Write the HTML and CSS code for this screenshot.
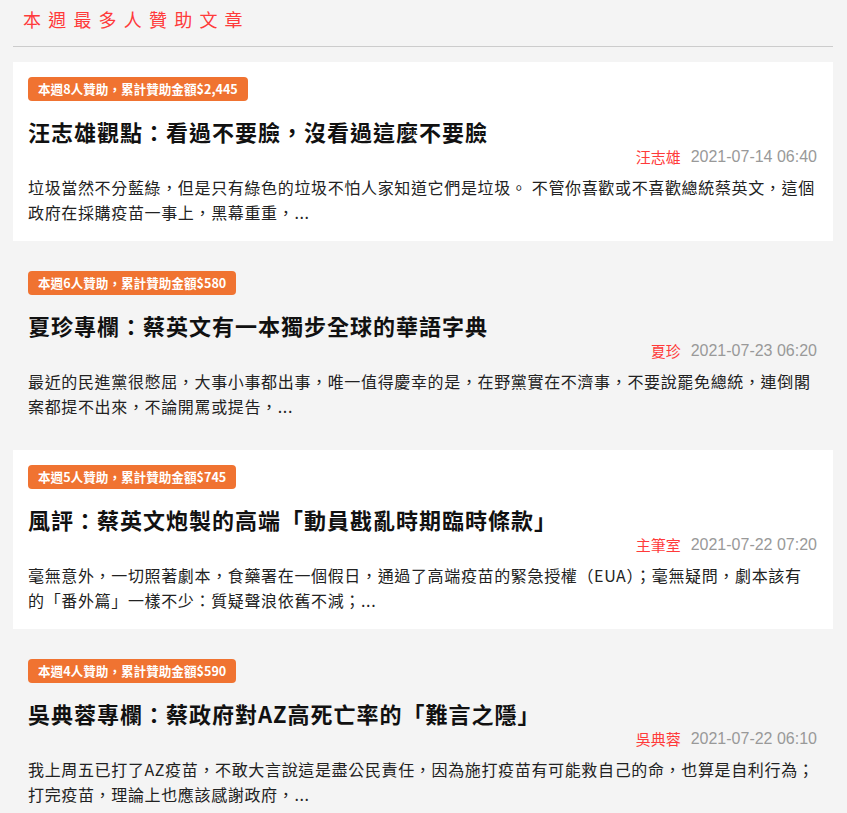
FILE: index.html
```html
<!DOCTYPE html>
<html lang="zh-Hant">
<head>
    <meta charset="UTF-8">
    <meta name="viewport" content="width=device-width, initial-scale=1.0">
    <title>本週最多人贊助文章</title>
    <link rel="stylesheet" href="styles.css">
</head>
<body>
    <div class="page">
        <h2 class="section-title">本週最多人贊助文章</h2>
        <hr class="divider">

        <div class="article-list">
            <div class="article-card">
                <div class="sponsor-badge">本週8人贊助，累計贊助金額$2,445</div>
                <h3 class="article-title">汪志雄觀點：看過不要臉，沒看過這麼不要臉</h3>
                <div class="article-meta">
                    <span class="author">汪志雄</span>
                    <span class="date">2021-07-14 06:40</span>
                </div>
                <p class="article-summary">垃圾當然不分藍綠，但是只有綠色的垃圾不怕人家知道它們是垃圾。 不管你喜歡或不喜歡總統蔡英文，這個政府在採購疫苗一事上，黑幕重重，...</p>
            </div>

            <div class="article-card">
                <div class="sponsor-badge">本週6人贊助，累計贊助金額$580</div>
                <h3 class="article-title">夏珍專欄：蔡英文有一本獨步全球的華語字典</h3>
                <div class="article-meta">
                    <span class="author">夏珍</span>
                    <span class="date">2021-07-23 06:20</span>
                </div>
                <p class="article-summary">最近的民進黨很憋屈，大事小事都出事，唯一值得慶幸的是，在野黨實在不濟事，不要說罷免總統，連倒閣案都提不出來，不論開罵或提告，...</p>
            </div>

            <div class="article-card">
                <div class="sponsor-badge">本週5人贊助，累計贊助金額$745</div>
                <h3 class="article-title">風評：蔡英文炮製的高端「動員戡亂時期臨時條款」</h3>
                <div class="article-meta">
                    <span class="author">主筆室</span>
                    <span class="date">2021-07-22 07:20</span>
                </div>
                <p class="article-summary">毫無意外，一切照著劇本，食藥署在一個假日，通過了高端疫苗的緊急授權（EUA）；毫無疑問，劇本該有的「番外篇」一樣不少：質疑聲浪依舊不減；...</p>
            </div>

            <div class="article-card">
                <div class="sponsor-badge">本週4人贊助，累計贊助金額$590</div>
                <h3 class="article-title">吳典蓉專欄：蔡政府對AZ高死亡率的「難言之隱」</h3>
                <div class="article-meta">
                    <span class="author">吳典蓉</span>
                    <span class="date">2021-07-22 06:10</span>
                </div>
                <p class="article-summary">我上周五已打了AZ疫苗，不敢大言說這是盡公民責任，因為施打疫苗有可能救自己的命，也算是自利行為；打完疫苗，理論上也應該感謝政府，...</p>
            </div>
        </div>
    </div>
</body>
</html>
```

FILE: styles.css
```css
* {
    margin: 0;
    padding: 0;
    box-sizing: border-box;
}

body {
    font-family: 'Noto Sans CJK TC', 'Noto Sans', sans-serif;
    background: #f4f4f4;
    color: #222;
}

.page {
    padding: 0 14px 0 13px;
}

.section-title {
    padding: 5px 0 0 10px;
    font-size: 18px;
    font-weight: 400;
    line-height: 28px;
    letter-spacing: 7.2px;
    color: #ff3a3a;
}

.divider {
    border: none;
    border-top: 1px solid #cccccc;
    margin: 13px 0 15px;
}

.article-list {
    display: flex;
    flex-direction: column;
    gap: 15px;
}

.article-card {
    background: #f4f4f4;
    padding: 15px 16px 16px 15px;
}

.article-card:nth-child(odd) {
    background: #ffffff;
}

.sponsor-badge {
    width: fit-content;
    height: 24px;
    line-height: 24px;
    padding: 0 10px;
    border-radius: 4px;
    background: #f07331;
    color: #fff;
    font-size: 12.6px;
    font-weight: 700;
}

.article-title {
    margin-top: 15px;
    font-size: 22px;
    font-weight: 700;
    line-height: 30px;
    letter-spacing: 1px;
    color: #111;
}

.article-meta {
    margin-top: 2px;
    display: flex;
    justify-content: flex-end;
    align-items: center;
    gap: 10px;
    line-height: 18px;
}

.author {
    font-size: 15px;
    color: #ff3a3a;
}

.date {
    font-family: 'Liberation Sans', Arial, sans-serif;
    font-size: 16px;
    color: #999;
}

.article-summary {
    margin-top: 9px;
    font-size: 16px;
    line-height: 25px;
    letter-spacing: 0.65px;
    color: #222;
}
```
